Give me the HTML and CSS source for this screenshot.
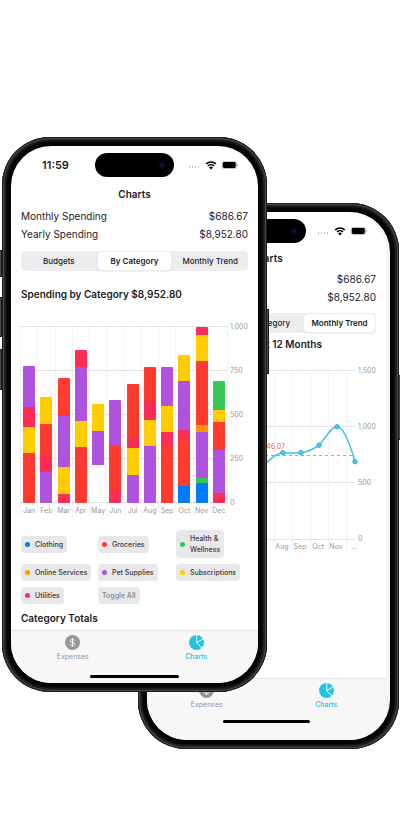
FILE: index.html
```html
<!DOCTYPE html>
<html lang="en">
<head>
<meta charset="utf-8">
<meta name="viewport" content="width=device-width, initial-scale=1">
<title>Charts</title>
<link rel="stylesheet" href="styles.css">
</head>
<body>
<svg class="sprite" aria-hidden="true">
  <symbol id="wifi" viewBox="0 0 20 16">
    <path d="M2 6.2a11.5 11.5 0 0 1 16 0M5 9.6a7.2 7.2 0 0 1 10 0" fill="none" stroke="#000" stroke-width="2.7"/>
    <path d="M10 15.6 6.8 12.3a4.5 4.5 0 0 1 6.4 0z"/>
  </symbol>
  <symbol id="battery" viewBox="0 0 34 16">
    <rect x="1" y="1" width="29" height="14" rx="4" fill="none" stroke="#a9a9a9" stroke-width="1.4"/>
    <rect x="2.500" y="2.2" width="26" height="11.600" rx="2.8"/>
    <path d="M31.4 5.6q2 .6 2 2.4t-2 2.4z" fill="#a9a9a9"/>
  </symbol>
  <symbol id="dollar" viewBox="0 0 30 30">
    <circle cx="15" cy="15" r="15" fill="#969696"/>
    <path d="M19.4 11.6c-.3-2-2-3.1-4.4-3.1s-4.300 1.200-4.300 3.100c0 4.400 8.800 2.300 8.800 6.700 0 2-1.900 3.200-4.500 3.200s-4.500-1.200-4.700-3.300M15 6.300v17.400" fill="none" stroke="#f7f7f7" stroke-width="2"/>
  </symbol>
  <symbol id="pie" viewBox="0 0 30 30">
    <circle cx="15" cy="15" r="15" fill="#22c4e6"/>
    <path d="M15.500 0v15.500L28.600 7.600M15.500 15.500 25.600 26" fill="none" stroke="#f7f7f7" stroke-width="2"/>
  </symbol>
</svg>

<main class="stage">
  <section class="phone phone-back" aria-label="Monthly trend screen">
    <i class="key key-power"></i>
    <div class="screen">
      <div class="status">
        <time>11:59</time>
        <span class="island"></span>
        <span class="signals"><i class="dots"></i><svg class="wifi"><use href="#wifi"/></svg><svg class="battery"><use href="#battery"/></svg></span>
      </div>
      <h1>Charts</h1>
      <dl class="totals">
        <div><dt>Monthly Spending</dt><dd>$686.67</dd></div>
        <div><dt>Yearly Spending</dt><dd>$8,952.80</dd></div>
      </dl>
      <div class="segmented">
        <button type="button">Budgets</button><button type="button">By Category</button><button type="button" class="selected">Monthly Trend</button>
      </div>
      <h2>Spending Over the Last 12 Months</h2>
      <div class="trend">
        <svg class="trend-plot" viewBox="0 0 198 180" preserveAspectRatio="none">
          <path class="rule" d="M0 .5h198M0 56.500h198M0 112.500h198M0 169.500h198"/>
          <path class="tick" d="M117.500 0v180M135.500 0v180M153.500 0v180M171.500 0v180M189.500 0v180"/>
          <path class="average" d="M0 85.500h198"/>
          <path class="curve" d="M89.500 98C98 97 102 96 107.500 93.600S118 82.700 125.800 82.700C132 82.700 138 83.500 144 82.700C150 82 156 80 162 75.200C168 70 173 56.700 180 56.700C187 56.700 193 74 198 91.700"/>
          <g class="points"><circle cx="125.800" cy="82.700" r="2.200"/><circle cx="144" cy="82.700" r="2.200"/><circle cx="162" cy="75.200" r="2.200"/><circle cx="180" cy="56.700" r="2.200"/><circle cx="198" cy="91.700" r="2.200"/></g>
        </svg>
        <span class="average-label">$746.07</span>
        <ol class="trend-scale"><li>1,500</li><li>1,000</li><li>500</li><li>0</li></ol>
        <ol class="trend-months"><li>Aug</li><li>Sep</li><li>Oct</li><li>Nov</li><li>...</li></ol>
      </div>
      <nav class="tabs">
        <a href="#expenses"><svg><use href="#dollar"/></svg>Expenses</a>
        <a href="#charts" class="current"><svg><use href="#pie"/></svg>Charts</a>
        <i class="home"></i>
      </nav>
    </div>
  </section>

  <section class="phone phone-front" aria-label="By category screen">
    <i class="key key-action"></i><i class="key key-up"></i><i class="key key-down"></i><i class="key key-power"></i>
    <div class="screen">
      <div class="status">
        <time>11:59</time>
        <span class="island"></span>
        <span class="signals"><i class="dots"></i><svg class="wifi"><use href="#wifi"/></svg><svg class="battery"><use href="#battery"/></svg></span>
      </div>
      <h1>Charts</h1>
      <dl class="totals">
        <div><dt>Monthly Spending</dt><dd>$686.67</dd></div>
        <div><dt>Yearly Spending</dt><dd>$8,952.80</dd></div>
      </dl>
      <div class="segmented">
        <button type="button">Budgets</button><button type="button" class="selected">By Category</button><button type="button">Monthly Trend</button>
      </div>
      <h2>Spending by Category $8,952.80</h2>
      <div class="stacked">
        <div class="columns" id="columns"></div>
        <ol class="scale"><li>1,000</li><li>750</li><li>500</li><li>250</li><li>0</li></ol>
      </div>
      <div class="legend">
        <button type="button"><i class="blue"></i>Clothing</button>
        <button type="button"><i class="red"></i>Groceries</button>
        <button type="button"><i class="green"></i>Health &amp;<br>Wellness</button>
        <button type="button"><i class="orange"></i>Online Services</button>
        <button type="button"><i class="purple"></i>Pet Supplies</button>
        <button type="button"><i class="yellow"></i>Subscriptions</button>
        <button type="button"><i class="pink"></i>Utilities</button>
        <button type="button" class="toggle">Toggle All</button>
      </div>
      <h2 class="totals-title">Category Totals</h2>
      <nav class="tabs">
        <a href="#expenses"><svg><use href="#dollar"/></svg>Expenses</a>
        <a href="#charts" class="current"><svg><use href="#pie"/></svg>Charts</a>
        <i class="home"></i>
      </nav>
    </div>
  </section>
</main>
<script src="chart.js"></script>
</body>
</html>
```

FILE: styles.css
```css
* { box-sizing: border-box; }
body { margin: 0; background: #fff; color: #1c1c1e; font-family: Inter, "Liberation Sans", sans-serif; overflow-x: hidden; }
h1, h2, dl, dd, ol { margin: 0; padding: 0; }
ol { list-style: none; }
button { margin: 0; border: 0; font: inherit; color: inherit; background: none; }
.sprite { position: absolute; width: 0; height: 0; }

.stage {
  display: grid;
  grid-template-columns: 2fr 136fr 129fr 132fr 1fr;
  align-items: start;
  padding: 137px 0 79px;
}
.phone {
  grid-row: 1;
  position: relative;
  display: flex;
  min-width: 0;
  padding: 9px;
  border-radius: 48px;
  background: #050505;
  box-shadow: inset 0 0 0 1px #1c1c1c, inset 0 0 0 2px #484848, inset 0 0 2px 4px #262626;
}
.phone-front { grid-column: 2 / 4; min-height: 555px; }
.phone-back { grid-column: 3 / 5; margin-top: 66px; min-height: 546px; }
.screen {
  flex: 1;
  min-width: 0;
  display: flex;
  flex-direction: column;
  overflow: hidden;
  border-radius: 40px;
  background: #fff;
}
.phone-back .screen { border-right: 4px solid #f5f5f7; }

.key { position: absolute; width: 3px; background: #4c4c4c; border: 1px solid #1a1a1a; }
.key-action { left: -3px; top: 113px; height: 27px; }
.key-up { left: -3px; top: 160px; height: 40px; }
.key-down { left: -3px; top: 212px; height: 41px; }
.key-power { right: -2px; top: 172px; height: 65px; }

.status {
  display: grid;
  grid-template-columns: 1fr 79px 1fr;
  align-items: center;
  height: 24px;
  margin-top: 7px;
}
.status time { padding-left: 5px; text-align: center; font-size: 11px; font-weight: 600; line-height: 16px; }
.island {
  height: 24px;
  border-radius: 12px;
  background: radial-gradient(circle at 67px 12px, #14145c 0, #0a0a28 2px, #000 4px);
}
.signals { display: flex; align-items: center; gap: 4px; padding: 0 0 1px 14px; }
.dots { width: 13px; height: 2px; margin-top: 5px; background: radial-gradient(circle, #bbb 0 1px, transparent 1px) 0 0 / 3px 2px; }
.wifi { width: 12px; height: 10px; }
.battery { width: 18px; height: 8px; }

h1 { margin-top: 9px; text-align: center; font-size: 10px; font-weight: 600; line-height: 16px; }
.totals { margin-top: 5px; padding: 0 10px; font-size: 10px; line-height: 18px; }
.totals div { display: flex; justify-content: space-between; }
.segmented {
  display: grid;
  grid-template-columns: repeat(3, 1fr);
  margin: 8px 10px 0;
  border-radius: 5px;
  background: #ededef;
}
.segmented button { height: 20px; padding: 0; border-radius: 5px; font-size: 8px; font-weight: 500; line-height: 18px; white-space: nowrap; }
.segmented .selected { border: 1px solid #ededef; background: #fff; box-shadow: 0 1px 2px #0001; font-weight: 600; }
h2 { margin: 15px 10px 0; font-size: 10px; font-weight: 600; line-height: 16px; white-space: nowrap; }

.stacked { display: flex; margin-top: 24px; padding: 0 8px 0 9px; color: #98989c; font-size: 7px; line-height: 8px; }
.columns {
  flex: 1;
  display: grid;
  grid-template-columns: repeat(12, 1fr);
  background: repeating-linear-gradient(#e3e3e6 0 1px, transparent 1px 44px);
  height: 190px;
  background-size: 100% 177px;
  background-repeat: no-repeat;
  border-right: 1px dotted #e8e8eb;
}
.month { display: flex; flex-direction: column; align-items: center; border-left: 1px dotted #e8e8eb; min-width: 0; }
.plot { height: 177px; display: flex; align-items: flex-end; }
.bar { display: flex; flex-direction: column-reverse; width: 12px; border-radius: 1px; overflow: hidden; }
.month span { margin-top: 4px; }
.scale { width: 22px; padding-left: 2px; margin-top: -3px; }
.scale li { height: 44px; }
.scale li:last-child { height: 8px; }

.blue { background: #007aff; }
.red { background: #ff3b30; }
.green { background: #34c759; }
.orange { background: #ff9500; }
.purple { background: #af52de; }
.yellow { background: #ffcc00; }
.pink { background: #ff2d55; }

.legend {
  display: grid;
  grid-template-columns: 77px 78px 1fr;
  align-items: center;
  justify-items: start;
  gap: 6px 0;
  margin: 14px 8px 0 10px;
}
.legend button {
  display: flex;
  align-items: center;
  gap: 5px;
  min-height: 17px;
  padding: 3px 4px;
  border-radius: 4px;
  background: #e8e8ea;
  color: #3a3a3c;
  font-size: 7px;
  font-weight: 500;
  line-height: 11px;
  text-align: left;
  white-space: nowrap;
}
.legend i { width: 5px; height: 5px; border-radius: 50%; }
.legend .toggle { color: #8e8e93; font-weight: 600; }
.totals-title { margin-top: 6px; }

.tabs {
  position: relative;
  display: grid;
  grid-template-columns: 1fr 1fr;
  margin-top: auto;
  height: 53px;
  padding-top: 4px;
  border-top: 1px solid #e6e6e8;
  background: #f7f7f7;
}
.phone-back .tabs { height: 62px; }
.tabs a { display: flex; flex-direction: column; align-items: center; gap: 3px; color: #969696; font-size: 7px; font-weight: 400; line-height: 8px; text-decoration: none; }
.tabs svg { width: 15px; height: 15px; }
.tabs .current { color: #22c4e6; font-weight: 500; }
.home { position: absolute; left: 32%; right: 32%; bottom: 5px; height: 3px; border-radius: 2px; background: #000; }
.phone-back .home { bottom: 17px; }

.phone-back .signals { padding-left: 11px; }
.phone-back h1 { margin-top: 7px; }
.phone-back .totals { margin-top: 4px; }
.phone-back .segmented { margin: 7px 10px 0; }
.phone-back h2 { margin-top: 3px; }

.trend {
  position: relative;
  display: grid;
  grid-template-columns: 1fr 31px;
  margin: 18px 0 0 10px;
  color: #98989c;
  font-size: 7px;
  line-height: 8px;
}
.trend-plot { width: 100%; height: 180px; overflow: visible; }
.trend-plot path { fill: none; vector-effect: non-scaling-stroke; }
.trend-plot .rule { stroke: #e3e3e6; }
.trend-plot .tick { stroke: #e8e8eb; stroke-dasharray: 1 1; }
.trend-plot .average { stroke: #f28b86; stroke-dasharray: 3 3; }
.trend-plot .curve { stroke: #3fc1e3; stroke-width: 1.5; }
.points { fill: #55c8e6; stroke: #2bb2d8; }
.average-label { position: absolute; right: 101px; top: 73px; color: #ff5a50; }
.trend-scale { padding-left: 3px; margin-top: -3px; }
.trend-scale li { height: 56px; }
.trend-months { position: absolute; right: 23px; top: 173px; display: grid; grid-template-columns: repeat(5, 18px); text-align: center; }
```

FILE: chart.js
```js
const months = {
  Jan: [["red", 282], ["yellow", 150], ["pink", 112], ["purple", 229]],
  Feb: [["purple", 176], ["pink", 87], ["red", 186], ["yellow", 150]],
  Mar: [["pink", 53], ["yellow", 150], ["purple", 288], ["red", 214]],
  Apr: [["red", 318], ["yellow", 148], ["purple", 303], ["pink", 98]],
  May: [["gap", 212], ["purple", 197], ["yellow", 150]],
  Jun: [["pink", 78], ["red", 250], ["purple", 254]],
  Jul: [["purple", 161], ["yellow", 150], ["pink", 62], ["red", 297]],
  Aug: [["purple", 322], ["yellow", 148], ["pink", 104], ["red", 195]],
  Sep: [["red", 326], ["pink", 74], ["yellow", 150], ["purple", 218]],
  Oct: [["blue", 97], ["red", 258], ["pink", 57], ["purple", 275], ["yellow", 148]],
  Nov: [["blue", 112], ["green", 32], ["purple", 260], ["orange", 34], ["red", 362], ["yellow", 150], ["pink", 47]],
  Dec: [["pink", 55], ["purple", 242], ["red", 159], ["yellow", 68], ["green", 165]]
};

document.getElementById("columns").innerHTML = Object.entries(months).map(([name, parts]) => {
  const total = parts.reduce((sum, part) => sum + part[1], 0);
  const segments = parts.map(([color, value]) => `<div class="${color}" style="flex:${value}"></div>`).join("");
  return `<div class="month"><div class="plot"><div class="bar" style="height:${total / 10}%">${segments}</div></div><span>${name}</span></div>`;
}).join("");
```
